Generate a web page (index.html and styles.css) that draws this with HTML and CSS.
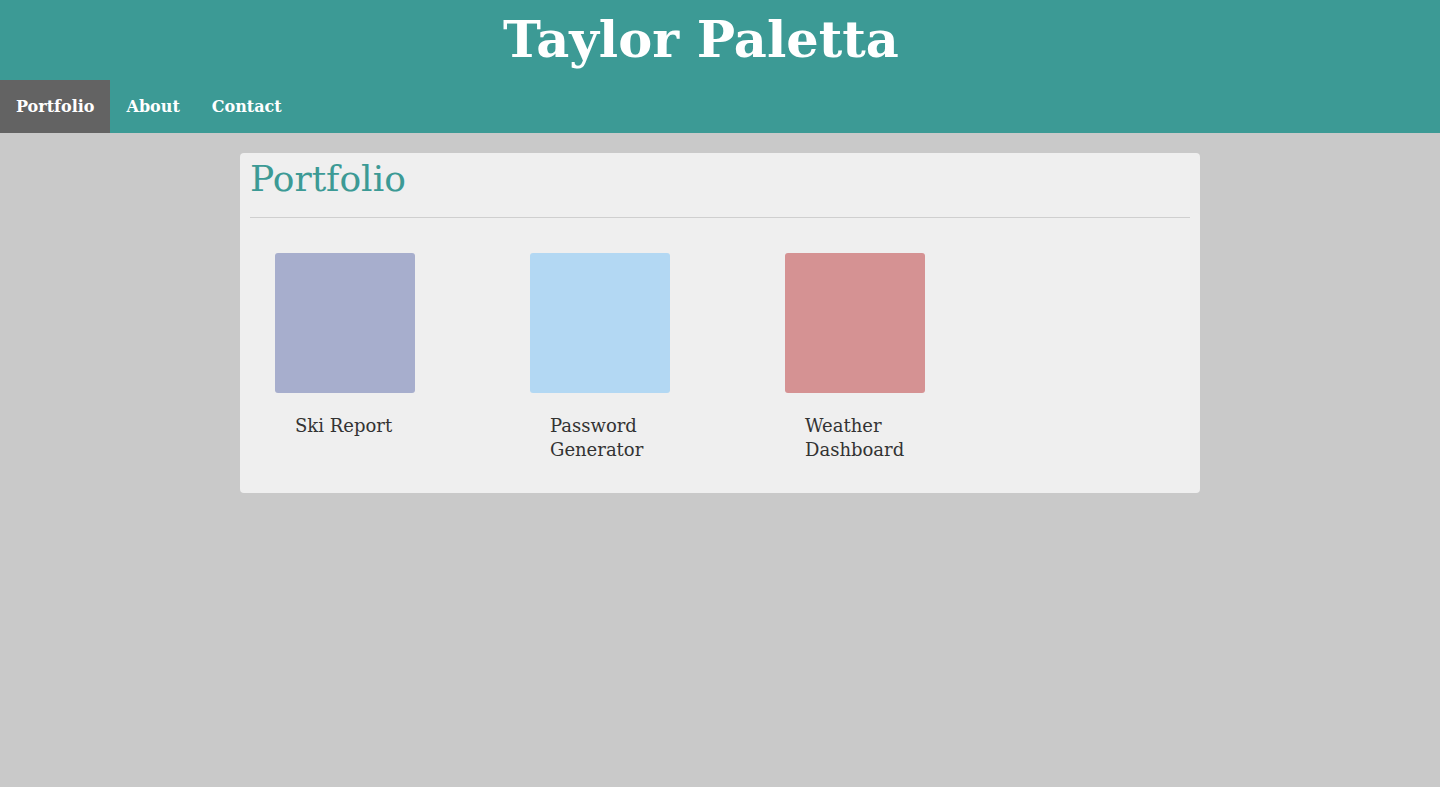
FILE: index.html
```html
<!DOCTYPE html>
<html lang="en">
<head>
<meta charset="utf-8">
<title>Taylor Paletta</title>
<link rel="stylesheet" href="styles.css">
</head>
<body>
<header class="site-header">
  <h1 class="site-title">Taylor Paletta</h1>
  <nav class="nav">
    <a class="nav-link active" href="#">Portfolio</a>
    <a class="nav-link" href="#">About</a>
    <a class="nav-link" href="#">Contact</a>
  </nav>
</header>
<main class="main">
  <section class="card">
    <h2 class="card-title">Portfolio</h2>
    <hr class="divider">
    <div class="projects">
      <div class="project">
        <div class="thumb thumb-ski"></div>
        <p class="project-name">Ski Report</p>
      </div>
      <div class="project">
        <div class="thumb thumb-pass"></div>
        <p class="project-name">Password Generator</p>
      </div>
      <div class="project">
        <div class="thumb thumb-weather"></div>
        <p class="project-name">Weather Dashboard</p>
      </div>
    </div>
  </section>
</main>
</body>
</html>
```
FILE: styles.css
```css
* { box-sizing: border-box; }
html, body { margin: 0; padding: 0; }
body {
  background: #c9c9c9;
  font-family: "DejaVu Serif", "Liberation Serif", serif;
  min-height: 787px;
}
.site-header {
  background: #3c9a95;
}
.site-title {
  margin: 0;
  height: 80px;
  padding: 4px 38px 0 0;
  text-align: center;
  color: #fff;
  font-size: 51px;
  line-height: 70px;
  font-weight: bold;
}
.nav {
  display: flex;
  height: 53px;
}
.nav-link {
  display: block;
  padding: 0 16px;
  line-height: 53px;
  color: #fff;
  text-decoration: none;
  font-weight: bold;
  font-size: 16px;
}
.nav-link.active {
  background: #636363;
}
.main {
  padding-top: 20px;
}
.card {
  width: 960px;
  margin: 0 auto;
  background: #efefef;
  border-radius: 4px;
  padding: 0 10px 31px;
}
.card-title {
  margin: 0;
  padding-top: 3px;
  height: 64px;
  color: #3c9a95;
  font-weight: normal;
  font-size: 36px;
  line-height: 46px;
}
.divider {
  margin: 0;
  border: 0;
  border-top: 1px solid #cfcfcf;
}
.projects {
  display: flex;
  gap: 115px;
  padding: 35px 25px 0;
}
.project {
  width: 140px;
}
.thumb {
  width: 140px;
  height: 140px;
  border-radius: 3px;
}
.thumb-ski { background: #a7aecd; }
.thumb-pass { background: #b3d8f3; }
.thumb-weather { background: #d59293; }
.project-name {
  margin: 21px 0 0 20px;
  width: 110px;
  color: #333;
  font-size: 18px;
  line-height: 24px;
}
```
